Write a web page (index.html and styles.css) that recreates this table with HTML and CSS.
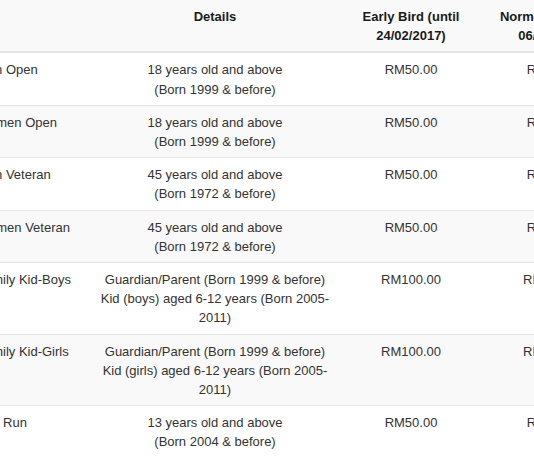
FILE: index.html
```html
<!DOCTYPE html>
<html>
<head>
<meta charset="utf-8">
<link rel="stylesheet" href="styles.css">
</head>
<body>
<div class="viewport">
<table class="prices">
  <colgroup>
    <col class="c-cat">
    <col class="c-det">
    <col class="c-early">
    <col class="c-norm">
  </colgroup>
  <thead>
    <tr>
      <th class="left"></th>
      <th>Details</th>
      <th>Early Bird (until 24/02/2017)</th>
      <th>Normal Fee (until 06/03/2017)</th>
    </tr>
  </thead>
  <tbody>
    <tr>
      <td class="left">Men Open</td>
      <td>18 years old and above<br>(Born 1999 &amp; before)</td>
      <td>RM50.00</td>
      <td>RM60.00</td>
    </tr>
    <tr class="alt">
      <td class="left">Women Open</td>
      <td>18 years old and above<br>(Born 1999 &amp; before)</td>
      <td>RM50.00</td>
      <td>RM60.00</td>
    </tr>
    <tr>
      <td class="left">Men Veteran</td>
      <td>45 years old and above<br>(Born 1972 &amp; before)</td>
      <td>RM50.00</td>
      <td>RM60.00</td>
    </tr>
    <tr class="alt">
      <td class="left">Women Veteran</td>
      <td>45 years old and above<br>(Born 1972 &amp; before)</td>
      <td>RM50.00</td>
      <td>RM60.00</td>
    </tr>
    <tr>
      <td class="left">Family Kid-Boys</td>
      <td>Guardian/Parent (Born 1999 &amp; before)<br>Kid (boys) aged 6-12 years (Born 2005-2011)</td>
      <td>RM100.00</td>
      <td>RM120.00</td>
    </tr>
    <tr class="alt">
      <td class="left">Family Kid-Girls</td>
      <td>Guardian/Parent (Born 1999 &amp; before)<br>Kid (girls) aged 6-12 years (Born 2005-2011)</td>
      <td>RM100.00</td>
      <td>RM120.00</td>
    </tr>
    <tr>
      <td class="left">Fun Run</td>
      <td>13 years old and above<br>(Born 2004 &amp; before)</td>
      <td>RM50.00</td>
      <td>RM60.00</td>
    </tr>
  </tbody>
</table>
</div>
</body>
</html>
```
FILE: styles.css
```css
html, body {
  margin: 0;
  padding: 0;
  overflow: hidden;
  background: #fff;
}
.viewport {
  width: 534px;
  height: 462px;
  overflow: hidden;
}
.prices {
  table-layout: fixed;
  border-collapse: collapse;
  border-spacing: 0;
  width: 658px;
  margin-left: -31px;
  font-family: "Liberation Sans", Arial, sans-serif;
  font-size: 13px;
  line-height: 19.2px;
  color: #333;
}
.c-cat { width: 118px; }
.c-det { width: 256px; }
.c-early { width: 136px; }
.c-norm { width: 148px; }
.prices th,
.prices td {
  padding: 7px 8px 6px;
  text-align: center;
  vertical-align: top;
}
.prices th {
  font-weight: bold;
  color: #1a1a1a;
  background: #f9f9f9;
  border-bottom: 2px solid #e6e6e6;
}
.prices td {
  border-top: 1px solid #e6e6e6;
}
.prices .left { text-align: left; }
.prices tr.alt td { background: #f9f9f9; }
```
